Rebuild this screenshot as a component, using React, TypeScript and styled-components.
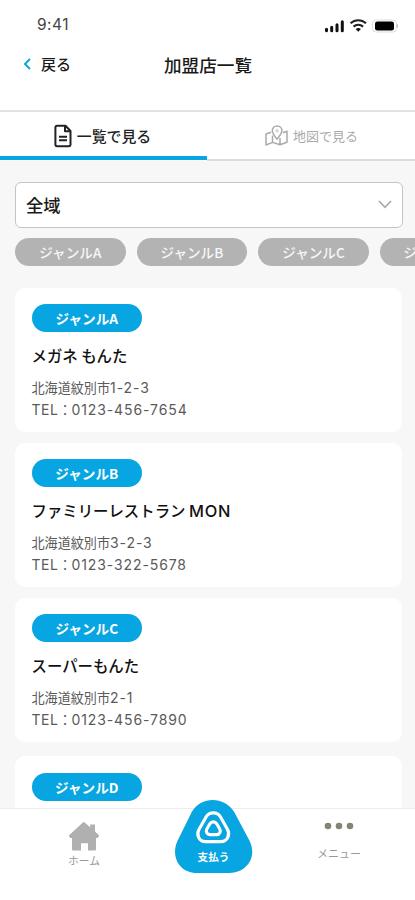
import React from "react";
import styled, { createGlobalStyle } from "styled-components";

const BLUE = "#07a5e1";

const GlobalStyle = createGlobalStyle`
  * { box-sizing: border-box; }
  html, body { margin: 0; padding: 0; background: #fff; overflow: hidden; }
  body { font-family: "Noto Sans CJK JP", sans-serif; color: #1a1a1a; }
`;

const Button = styled.button`
  font: inherit;
  border: 0;
  padding: 0;
  margin: 0;
  background: none;
  color: inherit;
`;

const Screen = styled.div`
  position: relative;
  width: 415px;
  height: 900px;
  overflow: hidden;
  display: flex;
  flex-direction: column;
  background: #f7f7f7;
`;

const StatusBar = styled.div`
  flex: none;
  height: 46px;
  padding: 3px 17px 0 37px;
  display: flex;
  align-items: center;
  justify-content: space-between;
  background: #fff;
`;

const Clock = styled.span`
  font: 400 15.5px/20px Inter, sans-serif;
  letter-spacing: 0.5px;
  color: #444;
`;

const Header = styled.header`
  flex: none;
  height: 66px;
  display: grid;
  grid-template-columns: 142px 132px 1fr;
  background: #fff;
  border-bottom: 2px solid #e2e2e2;
`;

const Back = styled(Button)`
  height: 36px;
  padding-left: 23px;
  display: flex;
  align-items: center;
  gap: 10px;
  font-size: 15px;
  line-height: 20px;
  font-weight: 500;
`;

const PageTitle = styled.h1`
  margin: 0;
  height: 38px;
  font-size: 17.6px;
  line-height: 37px;
  font-weight: 500;
  text-align: center;
  white-space: nowrap;
`;

const Tabs = styled.nav`
  flex: none;
  display: grid;
  grid-template-columns: 207px 1fr;
  height: 49px;
  background: #fff;
`;

const Tab = styled(Button)<{ $active?: boolean }>`
  display: flex;
  align-items: center;
  justify-content: center;
  gap: 5px;
  height: ${p => (p.$active ? 48 : 49)}px;
  padding: ${p => (p.$active ? "3px 2px 0 0" : "0 0 0 1px")};
  font-size: ${p => (p.$active ? 14.9 : 13)}px;
  font-weight: ${p => (p.$active ? 500 : 400)};
  color: ${p => (p.$active ? "#222" : "#aaa")};
  border-bottom: ${p => (p.$active ? `4px solid ${BLUE}` : "2px solid #dcdcdc")};
  white-space: nowrap;
`;

const Content = styled.main`
  flex: 1;
  min-height: 0;
  padding: 21px 0 0 15px;
  overflow: hidden;
`;

const Select = styled(Button)`
  width: 388px;
  height: 46px;
  display: flex;
  align-items: center;
  justify-content: space-between;
  padding: 0 10px 2px 10px;
  background: #fff;
  border: 1.5px solid #c4c4c4;
  border-radius: 6px;
  font-size: 17.3px;
  font-weight: 500;
`;

const Chips = styled.div`
  display: flex;
  gap: 11px;
  margin-top: 10px;
`;

const Pill = styled.div<{ $active?: boolean }>`
  flex: none;
  width: 110.6px;
  height: 28px;
  border-radius: 14px;
  display: flex;
  align-items: center;
  justify-content: center;
  background: ${p => (p.$active ? BLUE : "#b3b3b3")};
  color: ${p => (p.$active ? "#fff" : "#f7f7f7")};
  font-size: 13.6px;
  line-height: 26px;
  padding-bottom: 1px;
  font-weight: ${p => (p.$active ? 700 : 500)};
  white-space: nowrap;
`;

const Cards = styled.div`
  display: flex;
  flex-direction: column;
  margin-top: 22px;
`;

const Card = styled.article<{ $last?: boolean }>`
  width: 387px;
  height: 144px;
  flex: none;
  margin-bottom: ${p => (p.$last ? 14 : 11)}px;
  padding: 16px 16.5px 0;
  border-radius: 10px;
  background: #fff;
`;

const PeekCard = styled(Card)`
  padding-top: 17px;
`;

const ShopName = styled.h2`
  margin: 11px 0 0;
  font-size: 15.4px;
  line-height: 24px;
  font-weight: 500;
  color: #111;
  white-space: pre;
`;

const Detail = styled.p<{ $first?: boolean }>`
  margin: ${p => (p.$first ? 10 : 0)}px 0 0;
  height: 22px;
  font-size: 13.1px;
  line-height: 22px;
  color: #5a5a5a;
  white-space: nowrap;
`;

const Latin = styled.span<{ $size?: number; $spacing?: number }>`
  font-family: Inter, sans-serif;
  font-size: ${p => p.$size ?? 14}px;
  line-height: 1;
  letter-spacing: ${p => p.$spacing ?? 0.2}px;
`;

const BottomNav = styled.nav`
  position: absolute;
  inset: 808px 0 0;
  display: grid;
  grid-template-columns: 168px 91px 1fr;
  justify-items: center;
  background: #fff;
  border-top: 1px solid #ececec;
`;

const NavItem = styled(Button)<{ $padding: string; $gap: number; $size: number }>`
  display: flex;
  flex-direction: column;
  align-items: center;
  padding: ${p => p.$padding};
  height: 70px;
  gap: ${p => p.$gap}px;
  font-size: ${p => p.$size}px;
  line-height: 14px;
  color: #999;
`;

const PayButton = styled(Button)`
  position: relative;
  width: 79px;
  height: 76px;
  margin-top: -11px;
  color: #fff;
`;

const PayShape = styled.svg`
  display: block;
`;

const PayLabel = styled.span`
  position: absolute;
  inset: 52px 0 auto;
  text-align: center;
  font-size: 10.6px;
  line-height: 14px;
  font-weight: 700;
  color: #fff;
`;

const StatusIcons = () => (
  <svg width="76" height="18" viewBox="322 16 76 18" fill="none">
    <path d="M326.5 30.7v-1.5M331.7 30.7v-3.5M337 30.7v-6M342.3 30.7v-9" stroke="#111" strokeWidth="3" strokeLinecap="round" />
    <path d="M350.5 23.3c4.500-4.100 11-4.100 15.500 0M353.500 26.600c2.800-2.400 6.800-2.400 9.600 0" stroke="#222" strokeWidth="2.1" />
    <path d="M355.700 29q2.600-1.800 5.200 0l-2.600 2.800z" fill="#111" />
    <rect x="372.5" y="20" width="24" height="12" rx="3.5" stroke="#ddd" />
    <rect x="375" y="21.5" width="19" height="9" rx="2.3" fill="#000" />
    <path d="M397.300 24.500v3" stroke="#bbb" strokeWidth="1.5" />
  </svg>
);

const DocumentIcon = () => (
  <svg width="18" height="24" viewBox="0 0 18 24" fill="none" stroke="#222" strokeWidth="2" strokeLinejoin="round">
    <path d="M3 1.8h8.500L16.500 7v13.500a1.800 1.800 0 0 1-1.800 1.800H3.200a1.800 1.800 0 0 1-1.800-1.800V3.400A1.600 1.600 0 0 1 3 1.800z" />
    <path d="M11 2v5.200h5M5 12.800h8M5 16.300h8" />
  </svg>
);

const MapIcon = () => (
  <svg width="23" height="21" viewBox="0 0 23 21" fill="none" stroke="#aaa" strokeWidth="1.5" strokeLinejoin="round">
    <path d="M6 7.200 1 9v11l6.500-2.600 7.500 2.400 7-2.500v-11l-4 1.400M7.500 10.500v6.900M15 13v6.800" />
    <path d="M12 14.200C9 10.300 7.300 8.100 7.300 5.700a4.800 4.800 0 0 1 9.600 0c0 2.400-1.800 4.600-4.900 8.500z" fill="#fff" />
    <circle cx="12.1" cy="5.8" r="1.2" strokeWidth=".7" />
  </svg>
);

const shops = [
  { genre: "A", name: "メガネ もんた", latin: "", city: "1-2-3", tel: "0123-456-7654" },
  { genre: "B", name: "ファミリーレストラン ", latin: "MON", city: "3-2-3", tel: "0123-322-5678" },
  { genre: "C", name: "スーパーもんた", latin: "", city: "2-1", tel: "0123-456-7890" },
];

export default function App() {
  return (
    <>
      <GlobalStyle />
      <Screen>
        <StatusBar><Clock>9:41</Clock><StatusIcons /></StatusBar>
        <Header>
          <Back>
            <svg width="8" height="12" viewBox="0 0 8 12" fill="none" stroke={BLUE} strokeWidth="2"><path d="M7 1 2 6l5 5" /></svg>
            戻る
          </Back>
          <PageTitle>加盟店一覧</PageTitle>
        </Header>
        <Tabs>
          <Tab $active><DocumentIcon />一覧で見る</Tab>
          <Tab><MapIcon />地図で見る</Tab>
        </Tabs>
        <Content>
          <Select>
            全域
            <svg width="14" height="9" viewBox="0 0 14 9" fill="none" stroke="#aaa" strokeWidth="1.7"><path d="m1 1 6 6.300L13 1" /></svg>
          </Select>
          <Chips>{["A", "B", "C", "D"].map(g => <Pill key={g}>ジャンル{g}</Pill>)}</Chips>
          <Cards>
            {shops.map((s, i) => (
              <Card key={s.genre} $last={i === shops.length - 1}>
                <Pill $active>ジャンル{s.genre}</Pill>
                <ShopName>{s.name}{s.latin && <Latin $size={16.4} $spacing={0.8}>{s.latin}</Latin>}</ShopName>
                <Detail $first>北海道紋別市<Latin $spacing={0.9}>{s.city}</Latin></Detail>
                <Detail><Latin $spacing={0.5}>TEL</Latin>：<Latin $spacing={0.9}>{s.tel}</Latin></Detail>
              </Card>
            ))}
            <PeekCard><Pill $active>ジャンルD</Pill></PeekCard>
          </Cards>
        </Content>
        <BottomNav>
          <NavItem $padding="12px 0 0" $gap={2} $size={10.8}>
            <svg width="32" height="30" viewBox="0 0 32 30" fill="#b0b0b0"><path d="m15.700.8 6.500 5.500V3.500H27v7l4.200 4-1.500 2.400H28v11.600q0 1-1 1h-7v-7.200h-7v7.200H5q-1 0-1-1V16.900H2.200L.8 14.500z" /></svg>
            ホーム
          </NavItem>
          <PayButton>
            <PayShape width="79" height="76" viewBox="0 0 80 76" preserveAspectRatio="none" fill="none">
              <path d="M18 14C27-2 51-2 61 14L75 40C86 58 74 75 56 75H23C5 75-5 57 5 40z" fill={BLUE} />
              <g stroke="#fff" strokeWidth="3.2">
                <path d="M32.500 19c3.200-5.500 11.400-5.500 14.600 0l7 12.200c3.200 5.500-.2 12.500-6.600 12.500H31.800c-6.400 0-9.600-7-6.400-12.500z" />
                <path d="M36.300 25.800c1.700-2.600 5.300-2.600 7 0l3 5.200c1.500 2.600-.1 5.600-3 5.600h-6.900c-2.900 0-4.600-3-3.100-5.600z" />
              </g>
            </PayShape>
            <PayLabel>支払う</PayLabel>
          </PayButton>
          <NavItem $padding="13px 0 0 4px" $gap={16} $size={11}>
            <svg width="30" height="8" viewBox="0 0 30 8" fill="#858474"><circle cx="4" cy="4" r="3.3" /><circle cx="15" cy="4" r="3.3" /><circle cx="26" cy="4" r="3.3" /></svg>
            メニュー
          </NavItem>
        </BottomNav>
      </Screen>
    </>
  );
}
